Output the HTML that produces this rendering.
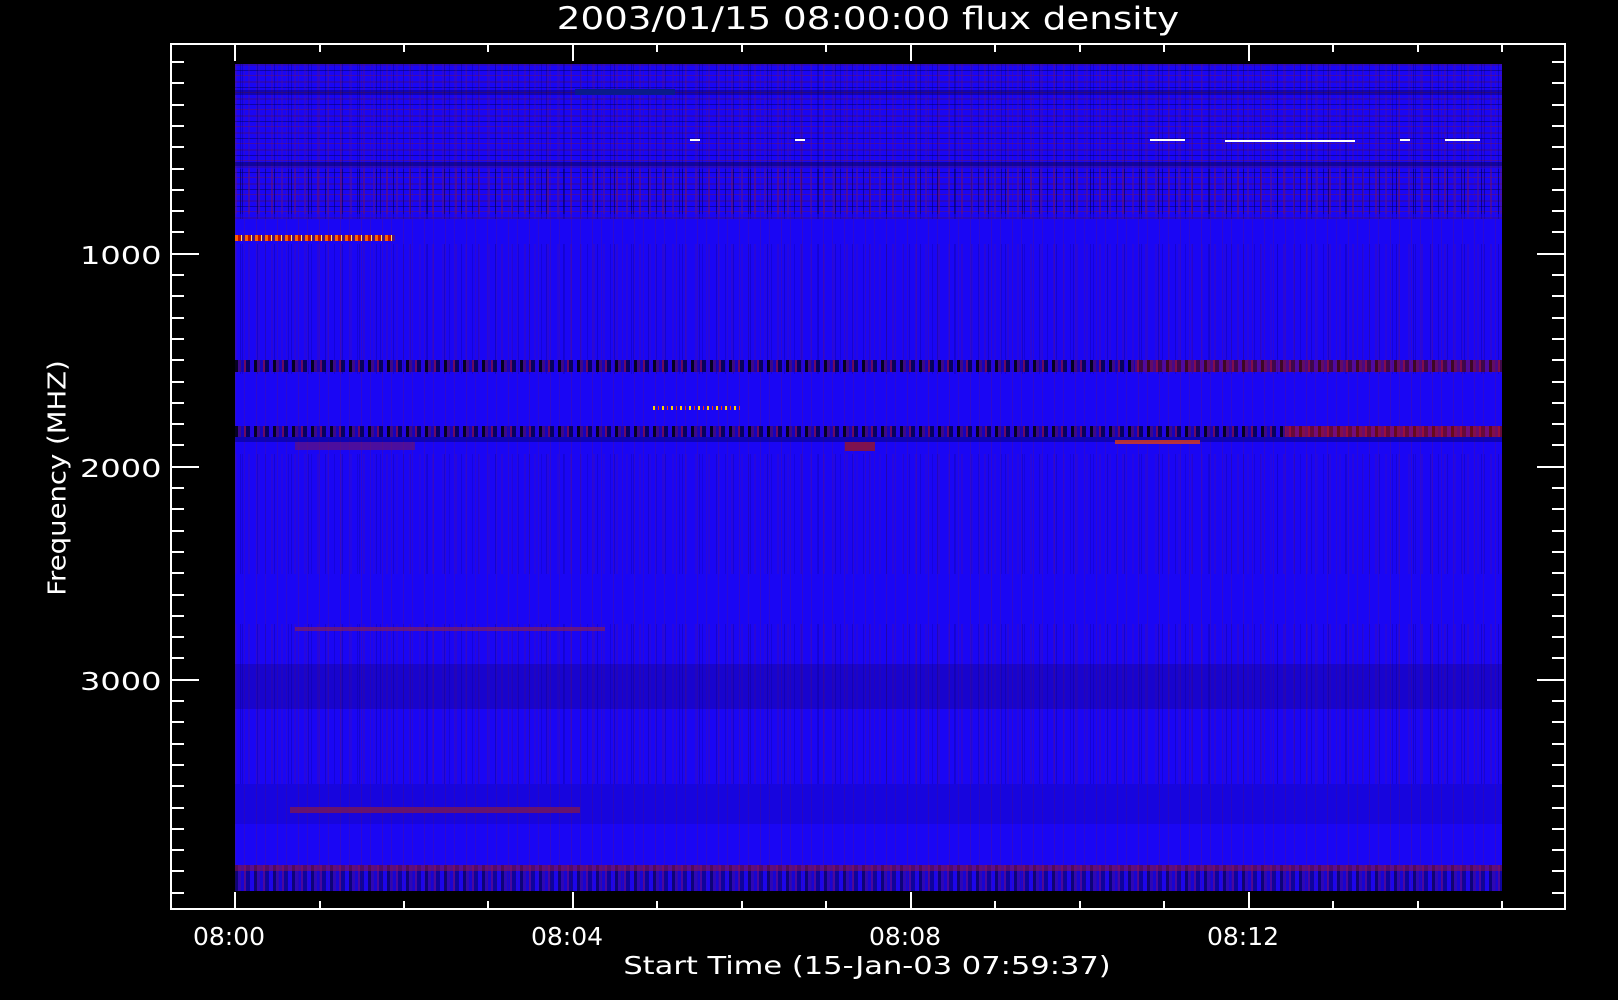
<!DOCTYPE html>
<html><head><meta charset="utf-8"><style>
body{margin:0;width:1618px;height:1000px;background:#000;overflow:hidden;position:relative;font-family:"DejaVu Sans","Liberation Sans",sans-serif;color:#fff}
.a{position:absolute}
.t{position:absolute;background:#fff}
.lbl{position:absolute;font-size:25px;line-height:1;white-space:nowrap}
#spec{position:absolute;left:235px;top:64px;width:1267px;height:827px;background:#1a06f4;overflow:hidden}
.n1{background:repeating-linear-gradient(90deg,rgba(90,20,140,.55) 0 2px,transparent 2px 7px,rgba(0,0,80,.5) 7px 8px,transparent 8px 13px,rgba(120,20,90,.5) 13px 15px,transparent 15px 23px),repeating-linear-gradient(90deg,transparent 0 5px,rgba(0,0,40,.5) 5px 6px,transparent 6px 17px)}
.n2{background:repeating-linear-gradient(90deg,rgba(0,0,0,.85) 0 3px,rgba(70,10,110,.8) 3px 6px,rgba(20,0,150,.6) 6px 9px,rgba(140,10,40,.7) 9px 11px,rgba(0,0,60,.8) 11px 15px,rgba(40,0,200,.4) 15px 19px)}
.n3{background:repeating-linear-gradient(90deg,rgba(100,20,110,.3) 0 1px,transparent 1px 9px,rgba(100,20,110,.25) 9px 10px,transparent 10px 21px)}
.h{background:repeating-linear-gradient(180deg,rgba(60,10,130,.45) 0 2px,transparent 2px 6px,rgba(0,0,90,.5) 6px 7px,transparent 7px 11px,rgba(120,20,60,.4) 11px 12px,transparent 12px 17px)}
</style></head><body>
<div class="lbl" style="left:868px;top:4px;font-size:31px;transform:translateX(-50%) scaleX(1.2)">2003/01/15 08:00:00 flux density</div>

<div id="spec">
 <div class="a n3" style="left:0;top:0;width:100%;height:100%"></div>
 <div class="a h" style="left:0;top:0;width:100%;height:155px"></div>
 <div class="a n1" style="left:0;top:0;width:100%;height:155px;opacity:.45"></div>
 <div class="a" style="left:0;top:26px;width:100%;height:5px;background:rgba(0,0,60,.35)"></div>
 <div class="a" style="left:340px;top:25px;width:100px;height:6px;background:#0a1a8a"></div>
 <div class="a" style="left:0;top:98px;width:100%;height:4px;background:rgba(0,0,40,.4)"></div>
 <div class="a n1" style="left:0;top:105px;width:100%;height:45px;opacity:.7"></div>
 <div class="a" style="left:0;top:171px;width:160px;height:6px;background:repeating-linear-gradient(90deg,#ff6000 0 3px,#c01000 3px 6px,#ffe060 6px 7px,#501080 7px 10px)"></div>
 <div class="a" style="left:455px;top:75px;width:10px;height:2px;background:#fff"></div>
 <div class="a" style="left:560px;top:75px;width:10px;height:2px;background:#fff"></div>
 <div class="a" style="left:915px;top:75px;width:35px;height:2px;background:#fff"></div>
 <div class="a" style="left:990px;top:76px;width:130px;height:2px;background:#fff"></div>
 <div class="a" style="left:1165px;top:75px;width:10px;height:2px;background:#fff"></div>
 <div class="a" style="left:1210px;top:75px;width:35px;height:2px;background:#fff"></div>
 <div class="a n1" style="left:0;top:180px;width:100%;height:130px;opacity:.35"></div>
 <div class="a n2" style="left:0;top:296px;width:100%;height:12px"></div>
 <div class="a" style="left:900px;top:296px;width:367px;height:12px;background:rgba(170,20,40,.35)"></div>
 <div class="a" style="left:418px;top:342px;width:90px;height:4px;background:repeating-linear-gradient(90deg,#ffd000 0 2px,transparent 2px 5px,#ff3000 5px 6px,transparent 6px 9px)"></div>
 <div class="a n2" style="left:0;top:362px;width:100%;height:11px"></div>
 <div class="a" style="left:1050px;top:362px;width:217px;height:11px;background:rgba(200,20,20,.5)"></div>
 <div class="a" style="left:0;top:373px;width:100%;height:5px;background:rgba(0,0,120,.5)"></div>
 <div class="a" style="left:60px;top:378px;width:120px;height:8px;background:rgba(110,20,100,.6)"></div>
 <div class="a" style="left:610px;top:378px;width:30px;height:9px;background:rgba(150,20,40,.8)"></div>
 <div class="a" style="left:880px;top:376px;width:85px;height:4px;background:rgba(220,60,20,.8)"></div>
 <div class="a n1" style="left:0;top:390px;width:100%;height:120px;opacity:.3"></div>
 <div class="a n1" style="left:0;top:560px;width:100%;height:160px;opacity:.35"></div>
 <div class="a" style="left:60px;top:563px;width:310px;height:4px;background:rgba(130,30,90,.7)"></div>
 <div class="a" style="left:0;top:600px;width:100%;height:45px;background:rgba(20,0,90,.25)"></div>
 <div class="a" style="left:55px;top:743px;width:290px;height:6px;background:rgba(150,30,70,.75)"></div>
 <div class="a" style="left:0;top:720px;width:100%;height:40px;background:rgba(10,0,100,.15)"></div>
 <div class="a n2" style="left:0;top:801px;width:100%;height:26px;opacity:.6"></div>
 <div class="a" style="left:0;top:801px;width:100%;height:6px;background:rgba(150,20,60,.5)"></div>
</div>

<div class="a" style="left:170px;top:43px;width:1396px;height:867px;border:2px solid #fff;box-sizing:border-box"></div>
<div id="ticks"></div>

<div class="lbl" style="left:80px;top:243px;transform-origin:0 0;transform:scaleX(1.28)">1000</div>
<div class="lbl" style="left:80px;top:456px;transform-origin:0 0;transform:scaleX(1.28)">2000</div>
<div class="lbl" style="left:80px;top:669px;transform-origin:0 0;transform:scaleX(1.28)">3000</div>

<div class="lbl" style="left:193px;top:924px">08:00</div>
<div class="lbl" style="left:531px;top:924px">08:04</div>
<div class="lbl" style="left:869px;top:924px">08:08</div>
<div class="lbl" style="left:1207px;top:924px">08:12</div>

<div class="lbl" style="left:867px;top:953px;transform:translateX(-50%) scaleX(1.22)">Start Time (15-Jan-03 07:59:37)</div>
<div class="lbl" style="left:57px;top:478px;transform:translate(-50%,-50%) rotate(-90deg) scaleX(1.1);font-size:25px">Frequency (MHZ)</div>

<script>
var s='';
for(var i=0;i<40;i++){var y=62+i*21.3;if(y>908)break;var maj=(Math.abs(y-254)<3||Math.abs(y-467)<3||Math.abs(y-680)<3);var L=maj?29:14;
s+='<div class="t" style="left:170px;top:'+(y-1).toFixed(1)+'px;width:'+L+'px;height:2px"></div>';
s+='<div class="t" style="left:'+(1566-L)+'px;top:'+(y-1).toFixed(1)+'px;width:'+L+'px;height:2px"></div>';}
for(var j=0;j<=15;j++){var x=235+j*84.47;var maj=(j%4==0);var L=maj?18:9;
s+='<div class="t" style="left:'+(x-1).toFixed(1)+'px;top:43px;width:2px;height:'+L+'px"></div>';
s+='<div class="t" style="left:'+(x-1).toFixed(1)+'px;top:'+(910-L)+'px;width:2px;height:'+L+'px"></div>';}
document.getElementById('ticks').innerHTML=s;
</script>
</body></html>
